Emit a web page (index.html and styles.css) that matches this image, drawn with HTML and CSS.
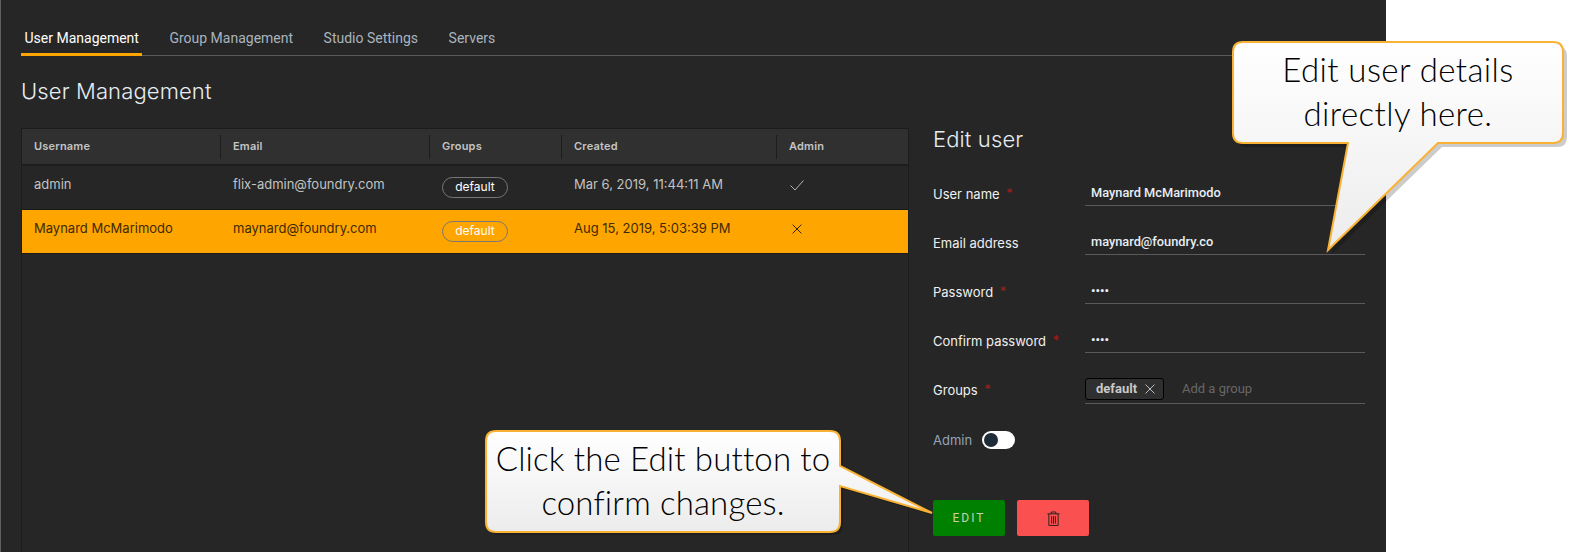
FILE: index.html
```html
<!DOCTYPE html>
<html lang="en">
<head>
<meta charset="utf-8">
<title>User Management</title>
<link rel="stylesheet" href="styles.css">
</head>
<body>
<div class="app">
  <nav class="tabs">
    <a class="tab active">User Management</a>
    <a class="tab">Group Management</a>
    <a class="tab">Studio Settings</a>
    <a class="tab">Servers</a>
  </nav>
  <h1 class="title">User Management</h1>
  <div class="main">
    <section class="table">
      <div class="row head">
        <div class="cell">Username</div>
        <div class="cell">Email</div>
        <div class="cell">Groups</div>
        <div class="cell">Created</div>
        <div class="cell">Admin</div>
      </div>
      <div class="row body">
        <div class="cell">admin</div>
        <div class="cell">flix-admin@foundry.com</div>
        <div class="cell"><span class="pill">default</span></div>
        <div class="cell">Mar 6, 2019, 11:44:11 AM</div>
        <div class="cell"><svg class="mark" viewBox="0 0 16 16"><path d="M1.5 8.5 6 13 14.5 3.5"/></svg></div>
      </div>
      <div class="row body selected">
        <div class="cell">Maynard McMarimodo</div>
        <div class="cell">maynard@foundry.com</div>
        <div class="cell"><span class="pill">default</span></div>
        <div class="cell">Aug 15, 2019, 5:03:39 PM</div>
        <div class="cell"><svg class="mark" viewBox="0 0 16 16"><path d="M3 3 13 13M13 3 3 13"/></svg></div>
      </div>
    </section>
    <section class="form">
      <h2 class="form-title">Edit user</h2>
      <div class="field">
        <label class="label">User name <i class="req">*</i></label>
        <div class="input">Maynard McMarimodo</div>
      </div>
      <div class="field">
        <label class="label">Email address</label>
        <div class="input">maynard@foundry.co</div>
      </div>
      <div class="field">
        <label class="label">Password <i class="req">*</i></label>
        <div class="input dots">••••</div>
      </div>
      <div class="field">
        <label class="label">Confirm password <i class="req">*</i></label>
        <div class="input dots">••••</div>
      </div>
      <div class="field">
        <label class="label">Groups <i class="req">*</i></label>
        <div class="input groups">
          <span class="chip">default<svg class="chip-x" viewBox="0 0 10 10"><path d="M.5.5 9.5 9.5M9.5.5.5 9.5"/></svg></span>
          <span class="placeholder">Add a group</span>
        </div>
      </div>
      <div class="admin">
        <span class="admin-label">Admin</span>
        <span class="toggle"><span class="knob"></span></span>
      </div>
      <div class="actions">
        <button class="btn edit">EDIT</button>
        <button class="btn delete"><svg class="trash" viewBox="0 0 14 16"><path d="M.5 3h13M4.5 3V1h5v2M2 3v12.5h10V3M5 5.5v8M7 5.5v8M9 5.5v8"/></svg></button>
      </div>
    </section>
  </div>
</div>

<div class="callout callout-details">
  <svg class="bubble" viewBox="0 0 344 220">
    <defs><linearGradient id="g1" x1="0" y1="0" x2="0" y2="1"><stop offset="0" stop-color="#fff"/><stop offset="1" stop-color="#ececec"/></linearGradient></defs>
    <path class="shade" transform="translate(4 4)" d="M11 1H321Q331 1 331 11V92Q331 102 321 102H206L96 209 116 102H11Q1 102 1 92V11Q1 1 11 1Z"/>
    <path class="shape" fill="url(#g1)" d="M11 1H321Q331 1 331 11V92Q331 102 321 102H206L96 209 116 102H11Q1 102 1 92V11Q1 1 11 1Z"/>
  </svg>
  <p class="callout-text">Edit user details<br>directly here.</p>
</div>

<div class="callout callout-edit">
  <svg class="bubble" viewBox="0 0 460 115">
    <defs><linearGradient id="g2" x1="0" y1="0" x2="0" y2="1"><stop offset="0" stop-color="#fff"/><stop offset="1" stop-color="#ececec"/></linearGradient></defs>
    <path class="shade" transform="translate(3 3)" d="M11 1H345Q355 1 355 11V36L447 83 355 56V92Q355 102 345 102H11Q1 102 1 92V11Q1 1 11 1Z"/>
    <path class="shape" fill="url(#g2)" d="M11 1H345Q355 1 355 11V36L447 83 355 56V92Q355 102 345 102H11Q1 102 1 92V11Q1 1 11 1Z"/>
  </svg>
  <p class="callout-text">Click the Edit button to<br>confirm changes.</p>
</div>
</body>
</html>
```
FILE: styles.css
```css
* { box-sizing: border-box; }
html, body { margin: 0; padding: 0; height: 100%; background: #fff; overflow: hidden; }
body { position: relative; font-family: "Inter", "Liberation Sans", sans-serif; }

.app {
  width: 1386px;
  height: 552px;
  background: #262626;
  border-left: 1px solid #5f5f5f;
  padding: 24px 20px 0 20px;
  display: flex;
  flex-direction: column;
  overflow: hidden;
}

.tabs {
  display: flex;
  gap: 23.5px;
  height: 32px;
  width: 1344px;
  border-bottom: 1px solid #5a5a5a;
  flex: none;
}
.tab {
  font: 14px/28px "Roboto", sans-serif;
  color: #a9b4bf;
  padding: 0 3.5px;
  height: 32px;
}
.tab.active {
  color: #fff;
  border-bottom: 3px solid #ffa500;
}

.title {
  margin: 21px 0 23px;
  font: 300 22px/28px "Inter", sans-serif;
  letter-spacing: .12px;
  color: #e6edf3;
  flex: none;
}

.main { display: flex; flex: 1; min-height: 0; }

.table {
  width: 888px;
  border: 1px solid #1c1c1c;
  border-bottom: 0;
  flex: none;
}
.row {
  display: grid;
  grid-template-columns: 198px 209px 132px 215px 1fr;
}
.head {
  height: 37px;
  background: #303030;
  border-bottom: 2px solid #1d1d1d;
  align-items: center;
  font-size: 11px;
  font-weight: 600;
  letter-spacing: .2px;
  color: #c4c4c4;
}
.head .cell { height: 24px; line-height: 22px; padding-left: 12px; border-left: 1px solid #1d1d1d; }
.head .cell:first-child { border-left: 0; }
.body {
  height: 44px;
  padding-top: 9px;
  font-size: 13px;
  color: #c2c2c2;
  border-bottom: 1px solid #1a1a1a;
}
.body .cell { padding-left: 13px; line-height: 18px; }
.body .cell:first-child { padding-left: 12px; }
.selected { background: #ffa500; color: #3d2a00; }
.pill {
  display: block;
  width: 66px;
  height: 21px;
  margin-top: 2px;
  border: 1px solid #777;
  border-radius: 11px;
  font-size: 12px;
  line-height: 18px;
  text-align: center;
  color: #fff;
}
.mark { display: block; width: 16px; height: 16px; margin-top: 2px; fill: none; stroke: #b5b5b5; stroke-width: 1; }
.selected .mark { stroke: #111; width: 14px; margin-left: 1px; }

.form { margin-left: 24px; width: 432px; }
.form-title { margin: -3px 0 16px; font: 300 22px/28px "Inter", sans-serif; letter-spacing: .12px; color: #e6edf3; }
.field {
  display: grid;
  grid-template-columns: 152px 280px;
  height: 49px;
  align-items: center;
}
.label { font-size: 13px; color: #f0f0f0; }
.req { font-style: normal; color: #a51d16; margin-left: 3px; vertical-align: 1px; }
.input {
  height: 24px;
  border-bottom: 1px solid #5a5a5a;
  padding-left: 6px;
  font: 500 12.8px/22px "Roboto", sans-serif;
  color: #e8eef4;
}
.groups { display: flex; align-items: flex-start; gap: 18px; font-weight: 400; padding-left: 0; height: 28px; }
.chip {
  display: flex;
  align-items: center;
  gap: 8px;
  width: 79px;
  height: 22px;
  margin-top: 2px;
  background: #2f2f2f;
  border: 1px solid #000;
  border-radius: 3px;
  padding-left: 10px;
  font: 700 13px/20px "Roboto", sans-serif;
  color: #c9c9c9;
}
.chip-x { width: 10px; height: 10px; margin-top: 1px; fill: none; stroke: #bbb; stroke-width: 1; }
.placeholder { font: 13px/24px "Roboto", sans-serif; color: #666; margin-top: 1px; }

.admin { display: flex; align-items: center; gap: 10px; margin-top: 16px; height: 20px; }
.admin-label { font-size: 13px; color: #93a4b8; }
.toggle { display: block; width: 33px; height: 18px; border-radius: 9px; background: #fff; padding: 2px; }
.knob { display: block; width: 14px; height: 14px; border-radius: 50%; background: #1e2b38; }

.actions { display: flex; gap: 12px; margin-top: 50px; }
.btn { width: 72px; height: 36px; border: 0; border-radius: 2px; padding: 0; display: flex; align-items: center; justify-content: center; }
.edit { background: #008000; color: #c8d0b0; font: 12px "Roboto", sans-serif; letter-spacing: 2px; }
.delete { background: #fa5050; }
.trash { width: 13px; height: 15px; fill: none; stroke: #1e1e1e; stroke-width: 1; }

.callout { position: absolute; }
.callout-details { left: 1232px; top: 41px; width: 344px; height: 220px; }
.callout-edit { left: 485px; top: 430px; width: 460px; height: 115px; }
.bubble { position: absolute; left: 0; top: 0; width: 100%; height: 100%; }
.shape { stroke: #f9b233; stroke-width: 2; }
.shade { fill: rgba(0, 0, 0, .2); }
.callout-text {
  position: relative;
  margin: 0;
  padding-top: 6px;
  font: 300 33px/44px "Lato", sans-serif;
  color: #000;
  text-align: center;
}
.callout-details .callout-text { width: 332px; letter-spacing: .4px; }
.callout-edit .callout-text { width: 356px; letter-spacing: .15px; }
```
